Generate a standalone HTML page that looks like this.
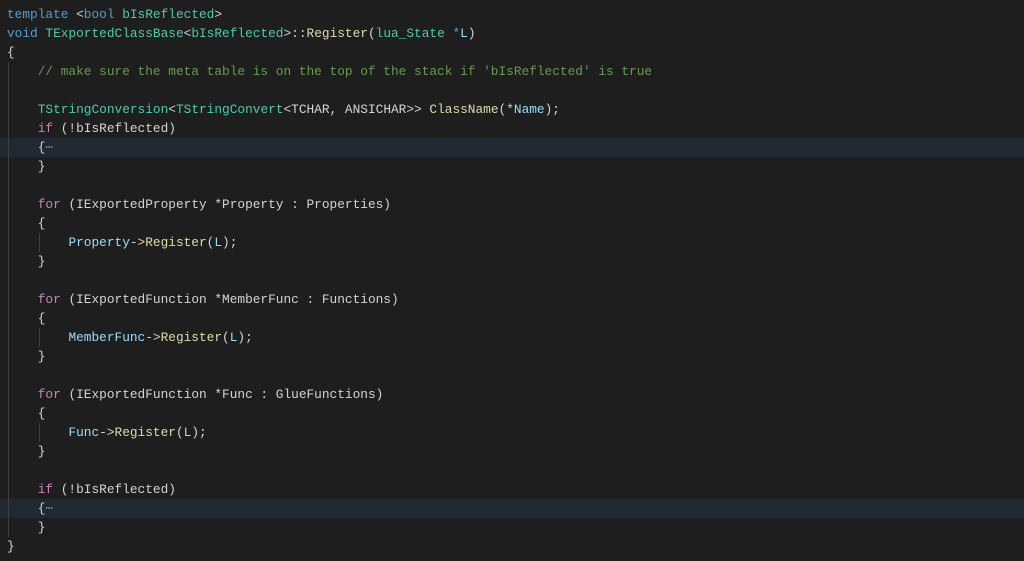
<!DOCTYPE html>
<html><head><meta charset="utf-8"><style>
html,body{margin:0;padding:0;background:#1e1e1e;width:1024px;height:561px;overflow:hidden}
.c{position:relative;top:1px;font-family:"Liberation Mono",monospace;font-size:12.8px;color:#d4d4d4;}
.l{position:absolute;left:7px;height:19px;line-height:19px;white-space:pre;}
.hl{position:absolute;left:0;width:1024px;height:19px;background:#212a34}
.g{position:absolute;width:1px;background:#404040}
.k{color:#569cd6}.p{color:#c586c0}.t{color:#4ec9b0}.f{color:#dcdcaa}.v{color:#9cdcfe}.cm{color:#6a9955}.d{color:#808080}
</style></head><body><div class="c">
<div class="hl" style="top:137px"></div>
<div class="hl" style="top:498px"></div>
<div class="g" style="left:8px;top:61px;height:475px"></div>
<div class="g" style="left:39px;top:232px;height:19px"></div>
<div class="g" style="left:39px;top:327px;height:19px"></div>
<div class="g" style="left:39px;top:422px;height:19px"></div>
<div class="l" style="top:4px"><span class="k">template</span> &lt;<span class="k">bool</span> <span class="t">bIsReflected</span>&gt;</div>
<div class="l" style="top:23px"><span class="k">void</span> <span class="t">TExportedClassBase</span>&lt;<span class="t">bIsReflected</span>&gt;::<span class="f">Register</span>(<span class="t">lua_State</span> <span class="k">*</span><span class="v">L</span>)</div>
<div class="l" style="top:42px">{</div>
<div class="l" style="top:61px">    <span class="cm">// make sure the meta table is on the top of the stack if 'bIsReflected' is true</span></div>
<div class="l" style="top:99px">    <span class="t">TStringConversion</span>&lt;<span class="t">TStringConvert</span>&lt;TCHAR, ANSICHAR&gt;&gt; <span class="f">ClassName</span>(*<span class="v">Name</span>);</div>
<div class="l" style="top:118px">    <span class="p">if</span> (!bIsReflected)</div>
<div class="l" style="top:137px">    {<span class="d">⋯</span></div>
<div class="l" style="top:156px">    }</div>
<div class="l" style="top:194px">    <span class="p">for</span> (IExportedProperty *Property : Properties)</div>
<div class="l" style="top:213px">    {</div>
<div class="l" style="top:232px">        <span class="v">Property</span>-&gt;<span class="f">Register</span>(<span class="v">L</span>);</div>
<div class="l" style="top:251px">    }</div>
<div class="l" style="top:289px">    <span class="p">for</span> (IExportedFunction *MemberFunc : Functions)</div>
<div class="l" style="top:308px">    {</div>
<div class="l" style="top:327px">        <span class="v">MemberFunc</span>-&gt;<span class="f">Register</span>(<span class="v">L</span>);</div>
<div class="l" style="top:346px">    }</div>
<div class="l" style="top:384px">    <span class="p">for</span> (IExportedFunction *Func : GlueFunctions)</div>
<div class="l" style="top:403px">    {</div>
<div class="l" style="top:422px">        <span class="v">Func</span>-&gt;<span class="f">Register</span>(<span class="v">L</span>);</div>
<div class="l" style="top:441px">    }</div>
<div class="l" style="top:479px">    <span class="p">if</span> (!bIsReflected)</div>
<div class="l" style="top:498px">    {<span class="d">⋯</span></div>
<div class="l" style="top:517px">    }</div>
<div class="l" style="top:536px">}</div>
</div></body></html>
